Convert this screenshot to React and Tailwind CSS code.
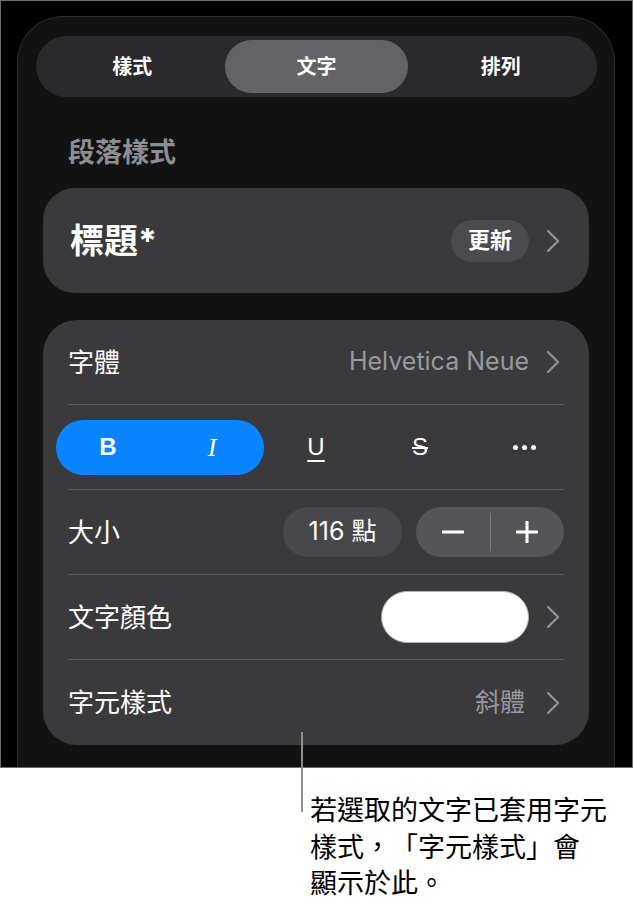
import React from "react";

const ui = { fontFamily: '"Inter", "Noto Sans CJK TC", sans-serif' };
const cjk = { fontFamily: '"Noto Sans CJK TC", "Noto Sans", sans-serif' };

function Chevron() {
  return (
    <svg width="14" height="24" viewBox="0 0 14 24" className="shrink-0">
      <polyline points="2,2 12,12 2,22" fill="none" stroke="#8e8e93" strokeWidth="2.4" strokeLinecap="round" strokeLinejoin="round" />
    </svg>
  );
}

function Row({ children, last }) {
  return (
    <div className={`mx-[25px] flex h-[85px] items-center ${last ? "" : "border-b border-[#5a5a5e]"}`}>
      {children}
    </div>
  );
}

export default function App() {
  return (
    <div className="relative h-[904px] w-[633px] bg-white" style={ui}>
      {/* screenshot */}
      <div className="flex h-[768px] flex-col border border-[#6e6e6e] bg-black">
        <div className="ml-[16px] mt-[15px] flex w-[598px] flex-1 flex-col overflow-hidden rounded-t-[46px] border-x border-t border-[#2c2c2e] bg-[#121212]">
          {/* tabs */}
          <div className="ml-[18px] mt-[19px] grid h-[61px] w-[561px] grid-cols-3 items-center rounded-full bg-[#2a2a2d] p-[4px]">
            <div className="text-center text-[20px] font-semibold text-white">樣式</div>
            <div className="mx-[1px] flex h-[53px] items-center justify-center rounded-full bg-[#636366] text-[20px] font-semibold text-white">文字</div>
            <div className="text-center text-[20px] font-semibold text-white">排列</div>
          </div>

          <div className="ml-[50px] mt-[38px] text-[27px] font-bold leading-[36px] text-[#8d8d92]">段落樣式</div>

          {/* paragraph style card */}
          <div className="ml-[25px] mt-[17px] flex h-[105px] w-[546px] shrink-0 items-center rounded-[32px] bg-[#3a3a3c] pl-[27px] pr-[29px]">
            <div className="flex-1 text-[34px] font-bold text-white">標題*</div>
            <div className="flex h-[42px] w-[78px] items-center justify-center rounded-full bg-[#4b4b4e] text-[22px] font-semibold text-white">更新</div>
            <div className="ml-[17px]"><Chevron /></div>
          </div>

          {/* text card */}
          <div className="ml-[25px] mt-[27px] h-[425px] w-[546px] shrink-0 rounded-[34px] bg-[#3a3a3c]">
            <Row>
              <div className="flex-1 text-[26px] text-white">字體</div>
              <div className="text-[25px] text-[#98989e]">Helvetica Neue</div>
              <div className="ml-[17px] mr-[4px]"><Chevron /></div>
            </Row>
            <Row>
              <div className="-mx-[12px] grid flex-1 grid-cols-5 items-center text-white">
                <div className="col-span-2 grid h-[55px] grid-cols-2 items-center rounded-full bg-[#0a84ff]">
                  <div className="text-center text-[24px] font-bold" style={{ fontFamily: '"Liberation Sans", sans-serif' }}>B</div>
                  <div className="text-center text-[26px] italic" style={{ fontFamily: '"Liberation Serif", serif' }}>I</div>
                </div>
                <div className="text-center text-[24px] underline decoration-2 underline-offset-[5px]" style={{ fontFamily: '"Liberation Sans", sans-serif' }}>U</div>
                <div className="text-center text-[24px] line-through decoration-2" style={{ fontFamily: '"Liberation Sans", sans-serif' }}>S</div>
                <div className="flex justify-center gap-[4px]">
                  <span className="h-[5px] w-[5px] rounded-full bg-white" />
                  <span className="h-[5px] w-[5px] rounded-full bg-white" />
                  <span className="h-[5px] w-[5px] rounded-full bg-white" />
                </div>
              </div>
            </Row>
            <Row>
              <div className="flex-1 text-[26px] text-white">大小</div>
              <div className="flex h-[50px] w-[119px] items-center justify-center rounded-full bg-[#48484b] text-[25px] text-white">116 點</div>
              <div className="ml-[14px] flex h-[50px] w-[148px] items-center rounded-full bg-[#555558]">
                <div className="flex flex-1 justify-center">
                  <svg width="22" height="22" viewBox="0 0 22 22"><line x1="1" y1="11" x2="21" y2="11" stroke="white" strokeWidth="3" strokeLinecap="round" /></svg>
                </div>
                <div className="h-[38px] w-px bg-[#7c7c80]" />
                <div className="flex flex-1 justify-center">
                  <svg width="22" height="22" viewBox="0 0 22 22"><line x1="1" y1="11" x2="21" y2="11" stroke="white" strokeWidth="3" strokeLinecap="round" /><line x1="11" y1="1" x2="11" y2="21" stroke="white" strokeWidth="3" strokeLinecap="round" /></svg>
                </div>
              </div>
            </Row>
            <Row>
              <div className="flex-1 text-[26px] text-white">文字顏色</div>
              <div className="h-[52px] w-[148px] rounded-[26px] border border-[#b0b0b0] bg-white" />
              <div className="ml-[17px] mr-[4px]"><Chevron /></div>
            </Row>
            <Row last>
              <div className="flex-1 text-[26px] text-white">字元樣式</div>
              <div className="text-[25px] text-[#98989e]">斜體</div>
              <div className="ml-[21px] mr-[4px]"><Chevron /></div>
            </Row>
          </div>
        </div>
      </div>

      {/* callout */}
      <div className="absolute left-[301px] top-[732px] h-[80px] w-[2px] bg-[#8e8e8e]" />
      <div className="absolute left-[310px] top-[791px] text-[27px] leading-[36.5px] text-black [text-spacing-trim:space-all]" style={cjk}>
        <div>若選取的文字已套用字元</div>
        <div>樣式，「字元樣式」會</div>
        <div>顯示於此。</div>
      </div>
    </div>
  );
}
